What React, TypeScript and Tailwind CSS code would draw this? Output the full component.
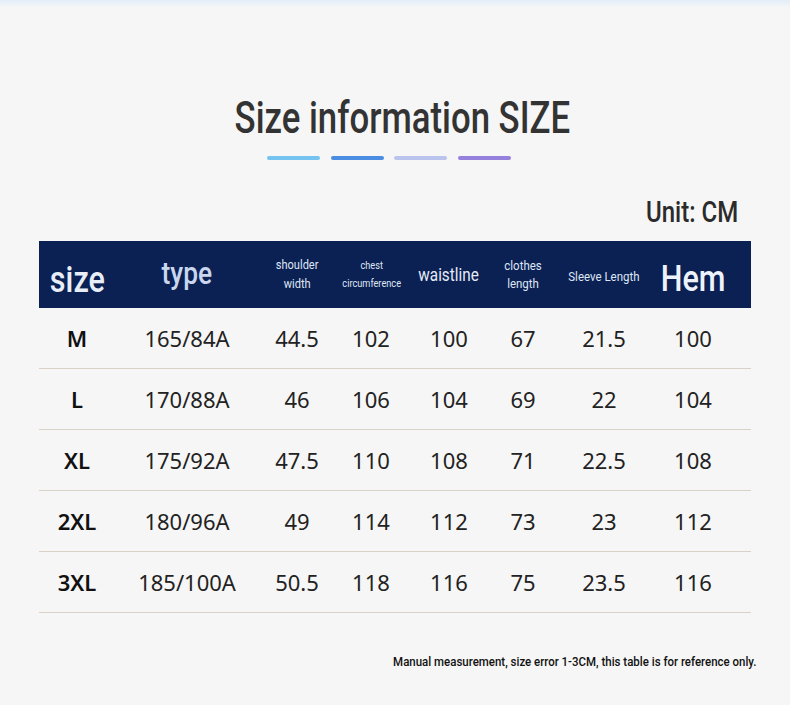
import React from "react";

const rows = [
  ["M", "165/84A", "44.5", "102", "100", "67", "21.5", "100"],
  ["L", "170/88A", "46", "106", "104", "69", "22", "104"],
  ["XL", "175/92A", "47.5", "110", "108", "71", "22.5", "108"],
  ["2XL", "180/96A", "49", "114", "112", "73", "23", "112"],
  ["3XL", "185/100A", "50.5", "118", "116", "75", "23.5", "116"],
];

const cols = "grid grid-cols-[76px_144px_76px_72px_84px_64px_98px_80px] pr-[18px]";
const rob = "font-['Roboto',sans-serif] whitespace-nowrap inline-block";

export default function App() {
  return (
    <div className="w-[790px] h-[705px] bg-[#f6f6f6] flex flex-col overflow-hidden">
      <div className="h-[8px] bg-gradient-to-b from-[#e3eef9] to-[#f6f6f6]" />
      <div className="flex flex-col items-center pt-[86px]">
        <div className="pl-[14px]">
          <h1 className={`${rob} origin-center scale-x-[0.79] text-[44px] leading-[48px] text-[#333] font-medium`}>
            Size information SIZE
          </h1>
        </div>
        <div className="flex mt-[14px] pr-[12px]">
          <div className="w-[53px] h-[4px] rounded-full bg-[#74c3f1]" />
          <div className="w-[53px] h-[4px] rounded-full bg-[#4c8de4] ml-[11px]" />
          <div className="w-[53px] h-[4px] rounded-full bg-[#bac4ec] ml-[10px]" />
          <div className="w-[53px] h-[4px] rounded-full bg-[#9580dd] ml-[11px]" />
        </div>
      </div>
      <div className="flex justify-end pr-[52px] mt-[32px]">
        <span className={`${rob} origin-right scale-x-[0.8] font-medium text-[30px] leading-[40px] text-[#2b2b2b]`}>Unit: CM</span>
      </div>
      <div className="mx-[39px] mt-[9px]">
        <div className={`${cols} h-[67px] bg-[#0b2053] items-center text-center`}>
          <div><span className={`${rob} scale-x-[0.85] text-[36px] font-medium text-[#e8eef8] pt-[10px]`}>size</span></div>
          <div><span className={`${rob} scale-x-[0.85] text-[31px] text-[#c9d6ee] font-medium`}>type</span></div>
          <div><span className={`${rob} scale-x-[0.85] text-[13px] leading-[19px] text-[#dfe6f3]`}>shoulder<br />width</span></div>
          <div><span className={`${rob} scale-x-[0.8] text-[11.5px] leading-[18px] text-[#dfe6f3]`}>chest<br />circumference</span></div>
          <div><span className={`${rob} scale-x-[0.85] text-[18px] text-[#e6ecf6]`}>waistline</span></div>
          <div><span className={`${rob} scale-x-[0.85] text-[13.5px] leading-[18px] text-[#dfe6f3]`}>clothes<br />length</span></div>
          <div><span className={`${rob} scale-x-[0.85] text-[13.5px] text-[#dfe6f3]`}>Sleeve Length</span></div>
          <div><span className={`${rob} scale-x-[0.85] text-[36px] font-medium text-[#eef3fb] pt-[8px]`}>Hem</span></div>
        </div>
        {rows.map((r) => (
          <div key={r[0]} className={`${cols} h-[61px] items-center text-center border-b border-[#d9d0c7] font-['Noto_Sans',sans-serif] text-[22px] text-[#222]`}>
            {r.map((c, i) => (
              <div key={i} className={i === 0 ? "font-semibold text-[#111]" : ""}>{c}</div>
            ))}
          </div>
        ))}
      </div>
      <div className="flex justify-end pr-[34px] mt-[38px]">
        <span className={`${rob} origin-right scale-x-[0.85] text-[13.5px] font-medium text-[#111]`}>
          Manual measurement, size error 1-3CM, this table is for reference only.
        </span>
      </div>
    </div>
  );
}
